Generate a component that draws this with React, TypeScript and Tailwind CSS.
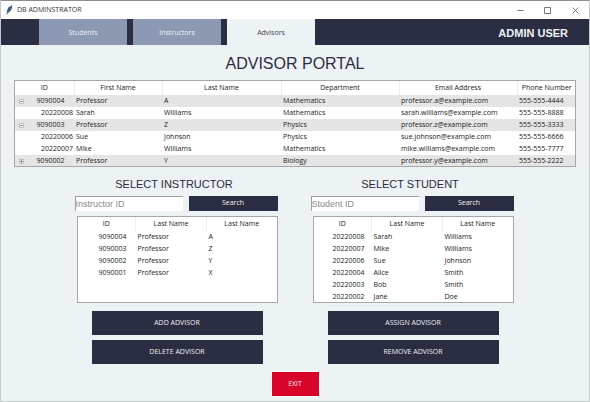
import React from "react";

type Row = {
  id: string;
  first: string;
  last: string;
  department: string;
  email: string;
  phone: string;
  expanded?: boolean;
  child?: boolean;
};

const advisors: Row[] = [
  { id: "9090004", first: "Professor", last: "A", department: "Mathematics", email: "professor.a@example.com", phone: "555-555-4444", expanded: true },
  { id: "20220008", first: "Sarah", last: "Williams", department: "Mathematics", email: "sarah.williams@example.com", phone: "555-555-8888", child: true },
  { id: "9090003", first: "Professor", last: "Z", department: "Physics", email: "professor.z@example.com", phone: "555-555-3333", expanded: true },
  { id: "20220006", first: "Sue", last: "Johnson", department: "Physics", email: "sue.johnson@example.com", phone: "555-555-6666", child: true },
  { id: "20220007", first: "Mike", last: "Williams", department: "Mathematics", email: "mike.williams@example.com", phone: "555-555-7777", child: true },
  { id: "9090002", first: "Professor", last: "Y", department: "Biology", email: "professor.y@example.com", phone: "555-555-2222", expanded: false },
];

const instructors = [
  ["9090004", "Professor", "A"],
  ["9090003", "Professor", "Z"],
  ["9090002", "Professor", "Y"],
  ["9090001", "Professor", "X"],
];

const students = [
  ["20220008", "Sarah", "Williams"],
  ["20220007", "Mike", "Williams"],
  ["20220006", "Sue", "Johnson"],
  ["20220004", "Alice", "Smith"],
  ["20220003", "Bob", "Smith"],
  ["20220002", "Jane", "Doe"],
];

function TitleBar() {
  return (
    <header className="flex h-[19px] items-center border-t border-[#8c8c8c] bg-white pl-[5px]">
      <svg className="h-[10px] w-[7px]" viewBox="0 0 7 10" aria-hidden="true">
        <path d="M6.2 0.3C3.6 0.8 1.6 3 1.4 6.2L1.9 8C4.6 7 6.4 4 6.2 0.3Z" fill="#41698f" />
        <path d="M3.4 2C2 3.4 1.4 5.6 1 9.6" fill="none" stroke="#1d2c3e" strokeWidth="0.7" />
      </svg>
      <h1 className="ml-[4px] text-[7px] text-[#333]">DB ADMINSTRATOR</h1>
      <div className="ml-auto flex">
        <button type="button" aria-label="Minimize" className="flex h-[18px] w-[28px] items-center justify-center">
          <svg className="size-[7px]" viewBox="0 0 7 7" stroke="#777" fill="none"><path d="M0.5 3.5H6.5" /></svg>
        </button>
        <button type="button" aria-label="Maximize" className="flex h-[18px] w-[27px] items-center justify-center">
          <svg className="size-[7px]" viewBox="0 0 7 7" stroke="#777" fill="none"><path d="M0.5 0.5H6.5V6.5H0.5Z" /></svg>
        </button>
        <button type="button" aria-label="Close" className="flex h-[18px] w-[28px] items-center justify-center">
          <svg className="size-[7px]" viewBox="0 0 7 7" stroke="#555" strokeWidth="0.8" fill="none"><path d="M0.5 0.5L6.5 6.5M6.5 0.5L0.5 6.5" /></svg>
        </button>
      </div>
    </header>
  );
}

function NavBar() {
  return (
    <nav className="flex h-[26px] items-stretch gap-[6px] bg-[#2b2d42] pl-[38px] text-[7px]">
      <button type="button" className="w-[88px] bg-[#8d99b3] pt-[3px] text-[#edf2f4]">Students</button>
      <button type="button" className="w-[88px] bg-[#8d99b3] pt-[3px] text-[#edf2f4]">Instructors</button>
      <button type="button" aria-current="page" className="w-[88px] bg-[#edf2f4] pt-[3px] text-[#40425a]">Advisors</button>
      <p className="ml-auto self-center pt-[3px] pr-[21px] font-['Liberation_Sans',Arial,sans-serif] text-[11px] font-bold text-[#edf2f4]">
        ADMIN USER
      </p>
    </nav>
  );
}

function HeadCell({ children }: { children: React.ReactNode }) {
  return (
    <th scope="col" className="h-[14px] border-r border-[#ececec] p-0 text-center font-normal last:border-r-0">
      {children}
    </th>
  );
}

function AdvisorTable() {
  return (
    <div className="mx-[13px] h-[87px] overflow-hidden border border-[#a3a8ad] bg-white">
      <table className="w-full table-fixed border-collapse text-[7px] leading-[12px] whitespace-nowrap text-[#222]">
        <colgroup>
          <col className="w-[59px]" />
          <col className="w-[88px]" />
          <col className="w-[119px]" />
          <col className="w-[118px]" />
          <col className="w-[118px]" />
          <col className="w-[59px]" />
        </colgroup>
        <thead>
          <tr>
            <HeadCell>ID</HeadCell>
            <HeadCell>First Name</HeadCell>
            <HeadCell>Last Name</HeadCell>
            <HeadCell>Department</HeadCell>
            <HeadCell>Email Address</HeadCell>
            <HeadCell>Phone Number</HeadCell>
          </tr>
        </thead>
        <tbody>
          {advisors.map((row) => (
            <tr key={row.id} className={row.child ? "h-[12px] bg-white" : "h-[12px] bg-[#e5e5e5]"}>
              <td className="p-0">
                <div className="flex items-center">
                  {row.child ? (
                    <span className="w-[25px] shrink-0" />
                  ) : (
                    <button
                      type="button"
                      aria-label={`Toggle ${row.id}`}
                      aria-expanded={row.expanded}
                      className="flex w-[12px] shrink-0 justify-center"
                    >
                      <svg className="size-[5px]" viewBox="0 0 5 5" fill="none">
                        <path d="M0.5 0.5H4.5V4.5H0.5Z" fill="#fff" stroke="#aaa" strokeWidth="0.7" />
                        <path d={row.expanded ? "M1.2 2.5H3.8" : "M1.2 2.5H3.8M2.5 1.2V3.8"} stroke="#556" strokeWidth="0.7" />
                      </svg>
                    </button>
                  )}
                  <span className="grow text-center">{row.id}</span>
                </div>
              </td>
              <td className="p-0 pl-[2px]">{row.first}</td>
              <td className="p-0 pl-[2px]">{row.last}</td>
              <td className="p-0 pl-[2px]">{row.department}</td>
              <td className="p-0 pl-[2px]">{row.email}</td>
              <td className="p-0 pl-[2px]">{row.phone}</td>
            </tr>
          ))}
        </tbody>
      </table>
    </div>
  );
}

type PickerProps = {
  title: string;
  field: string;
  rows: string[][];
  actions: string[];
};

function Picker({ title, field, rows, actions }: PickerProps) {
  return (
    <section className="w-[203px]">
      <h3 className="pr-[4px] text-center font-['Liberation_Sans',Arial,sans-serif] text-[11px] leading-[16px] text-[#2b2d42]">
        {title}
      </h3>
      <form className="mt-[4px] flex gap-[6px]" onSubmit={(e) => e.preventDefault()}>
        <input
          type="text"
          aria-label={field}
          placeholder={field}
          className="h-[15px] min-w-0 flex-1 border-t border-l border-[#a0a0a0] bg-white font-['Liberation_Sans',Arial,sans-serif] text-[9px] outline-none placeholder:text-[#8a8a8a]"
        />
        <button type="submit" className="h-[15px] w-[89px] bg-[#2b2d42] text-[7px] text-[#edf2f4]">
          Search
        </button>
      </form>
      <div className="mt-[5px] ml-[2px] h-[87px] overflow-hidden border border-[#a3a8ad] bg-white">
        <table className="w-full table-fixed border-collapse text-[7px] leading-[12px] whitespace-nowrap text-[#222]">
          <colgroup>
            <col className="w-[58px]" />
            <col className="w-[71px]" />
            <col className="w-[70px]" />
          </colgroup>
          <thead>
            <tr>
              <HeadCell>ID</HeadCell>
              <HeadCell>Last Name</HeadCell>
              <HeadCell>Last Name</HeadCell>
            </tr>
          </thead>
          <tbody>
            {rows.map(([id, first, last]) => (
              <tr key={id} className="h-[12px]">
                <td className="p-0 pl-[12px] text-center">{id}</td>
                <td className="p-0 pl-[2px]">{first}</td>
                <td className="p-0 pl-[2px]">{last}</td>
              </tr>
            ))}
          </tbody>
        </table>
      </div>
      <div className="mt-[8px] flex flex-col gap-[5px] pr-[15px] pl-[17px]">
        {actions.map((action) => (
          <button key={action} type="button" className="h-[24px] bg-[#2b2d42] text-[7px] text-[#edf2f4]">
            {action}
          </button>
        ))}
      </div>
    </section>
  );
}

export default function App() {
  return (
    <div className="flex min-h-screen flex-col border-x border-b border-[#c4c9cd] bg-[#edf2f4] font-['Open_Sans','Noto_Sans',sans-serif]">
      <TitleBar />
      <NavBar />
      <main className="flex grow flex-col">
        <h2 className="pt-[7px] pb-[5px] text-center font-['Liberation_Sans',Arial,sans-serif] text-[16px] leading-[23px] text-[#2b2d42]">
          ADVISOR PORTAL
        </h2>
        <AdvisorTable />
        <div className="mt-[9px] flex justify-center gap-[33px] pr-[2px]">
          <Picker title="SELECT INSTRUCTOR" field="Instructor ID" rows={instructors} actions={["ADD ADVISOR", "DELETE ADVISOR"]} />
          <Picker title="SELECT STUDENT" field="Student ID" rows={students} actions={["ASSIGN ADVISOR", "REMOVE ADVISOR"]} />
        </div>
        <button type="button" className="mt-[8px] h-[24px] w-[47px] self-center bg-[#d90429] text-[7px] text-[#edf2f4]">
          EXIT
        </button>
      </main>
    </div>
  );
}
